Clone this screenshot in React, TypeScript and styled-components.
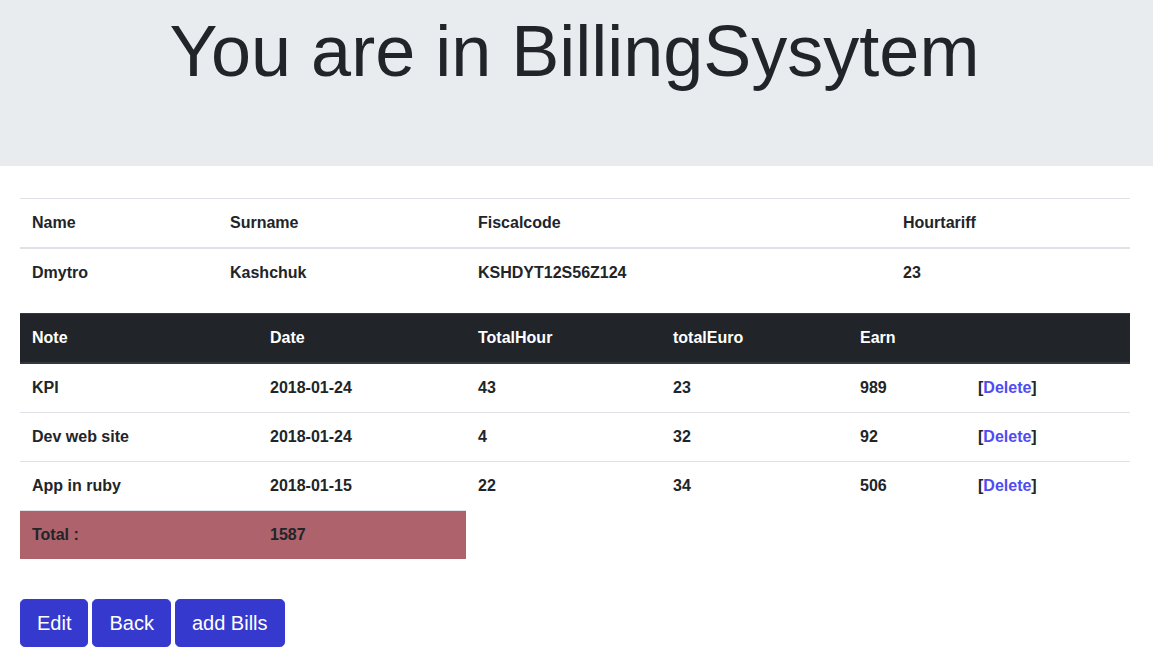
import React from 'react'
import styled, { createGlobalStyle } from 'styled-components'

const GlobalStyle = createGlobalStyle`
  body {
    margin: 0;
    font-family: "Liberation Sans", Arial, sans-serif;
    font-size: 16px;
    line-height: 1.5;
    color: #212529;
    background: #ffffff;
  }
`

const Jumbotron = styled.header`
  height: 166px;
  box-sizing: border-box;
  padding: 8px 4px 0 0;
  background: #e9ecef;
  text-align: center;
`

const Title = styled.h1`
  margin: 0;
  font-size: 72px;
  font-weight: 300;
  line-height: 1.2;
  color: #212529;
`

const Container = styled.main`
  padding: 32px 23px 0 20px;
`

const Table = styled.table`
  width: 100%;
  border-collapse: collapse;
  table-layout: fixed;
  margin-bottom: 16px;
  font-weight: 700;
`

const Th = styled.th<{ $dark?: boolean }>`
  padding: 12px;
  text-align: left;
  line-height: 24px;
  vertical-align: bottom;
  font-weight: 700;
  color: ${p => (p.$dark ? '#ffffff' : '#212529')};
  background: ${p => (p.$dark ? '#212529' : 'transparent')};
  border-top: 1px solid ${p => (p.$dark ? '#32383e' : '#dee2e6')};
  border-bottom: 2px solid ${p => (p.$dark ? '#32383e' : '#dee2e6')};
`

const Td = styled.td<{ $total?: boolean }>`
  padding: 12px;
  line-height: 24px;
  vertical-align: top;
  border-top: 1px solid #dee2e6;
  background: ${p => (p.$total ? '#ae626b' : 'transparent')};
`

const DeleteLink = styled.a`
  color: #4f4cf2;
  text-decoration: none;
  cursor: pointer;
`

const Actions = styled.div`
  display: flex;
  gap: 4px;
  margin-top: 40px;
`

const Button = styled.button`
  font-family: "Liberation Sans", Arial, sans-serif;
  font-size: 20px;
  line-height: 30px;
  padding: 8px 16px;
  color: #ffffff;
  background: #3639cd;
  border: 1px solid #3639cd;
  border-radius: 4.8px;
  cursor: pointer;
`

const person = { name: 'Dmytro', surname: 'Kashchuk', fiscal: 'KSHDYT12S56Z124', tariff: 23 }

const bills = [
  { note: 'KPI', date: '2018-01-24', hours: 43, euro: 23, earn: 989 },
  { note: 'Dev web site', date: '2018-01-24', hours: 4, euro: 32, earn: 92 },
  { note: 'App in ruby', date: '2018-01-15', hours: 22, euro: 34, earn: 506 }
]

export default function App() {
  const total = bills.reduce((sum, b) => sum + b.earn, 0)
  return (
    <>
      <GlobalStyle />
      <Jumbotron>
        <Title>You are in BillingSysytem</Title>
      </Jumbotron>
      <Container>
        <Table>
          <colgroup>
            <col style={{ width: 198 }} />
            <col style={{ width: 248 }} />
            <col style={{ width: 425 }} />
            <col />
          </colgroup>
          <thead>
            <tr>
              <Th>Name</Th>
              <Th>Surname</Th>
              <Th>Fiscalcode</Th>
              <Th>Hourtariff</Th>
            </tr>
          </thead>
          <tbody>
            <tr>
              <Td>{person.name}</Td>
              <Td>{person.surname}</Td>
              <Td>{person.fiscal}</Td>
              <Td>{person.tariff}</Td>
            </tr>
          </tbody>
        </Table>
        <Table>
          <colgroup>
            <col style={{ width: 238 }} />
            <col style={{ width: 208 }} />
            <col style={{ width: 195 }} />
            <col style={{ width: 187 }} />
            <col style={{ width: 118 }} />
            <col />
          </colgroup>
          <thead>
            <tr>
              <Th $dark>Note</Th>
              <Th $dark>Date</Th>
              <Th $dark>TotalHour</Th>
              <Th $dark>totalEuro</Th>
              <Th $dark>Earn</Th>
              <Th $dark></Th>
            </tr>
          </thead>
          <tbody>
            {bills.map(b => (
              <tr key={b.note}>
                <Td>{b.note}</Td>
                <Td>{b.date}</Td>
                <Td>{b.hours}</Td>
                <Td>{b.euro}</Td>
                <Td>{b.earn}</Td>
                <Td>
                  [<DeleteLink>Delete</DeleteLink>]
                </Td>
              </tr>
            ))}
            <tr>
              <Td $total>Total :</Td>
              <Td $total>{total}</Td>
            </tr>
          </tbody>
        </Table>
        <Actions>
          <Button>Edit</Button>
          <Button>Back</Button>
          <Button>add Bills</Button>
        </Actions>
      </Container>
    </>
  )
}
